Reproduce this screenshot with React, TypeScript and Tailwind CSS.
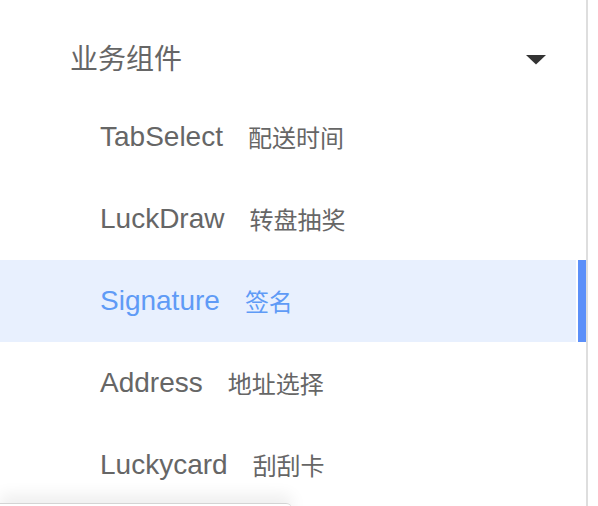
import React from 'react'

interface Item {
  name: string
  label: string
}

const items: Item[] = [
  { name: 'TabSelect', label: '配送时间' },
  { name: 'LuckDraw', label: '转盘抽奖' },
  { name: 'Signature', label: '签名' },
  { name: 'Address', label: '地址选择' },
  { name: 'Luckycard', label: '刮刮卡' },
]

const ACTIVE = 'Signature'

export default function App() {
  return (
    <div
      className="relative w-[598px] h-[506px] overflow-hidden bg-white"
      style={{ fontFamily: '"Liberation Sans", "Noto Sans CJK SC", sans-serif' }}
    >
      <div className="w-[588px] h-full border-r-2 border-[#dedede] flex flex-col">
        {/* Group header */}
        <div className="h-[79px] mt-[17px] flex items-center justify-between pl-[70px] pr-[40px] shrink-0">
          <span className="text-[28px] text-[#666] leading-none" style={{ fontFamily: '"Noto Sans CJK SC", sans-serif' }}>
            业务组件
          </span>
          <svg width="20" height="10" viewBox="0 0 20 10" className="mt-[6px]">
            <path d="M0 0 L20 0 L10 9.5 Z" fill="#333" />
          </svg>
        </div>

        {/* Items */}
        {items.map((item) => {
          const active = item.name === ACTIVE
          return (
            <div key={item.name} className="h-[82px] shrink-0 flex">
              <div
                className={`flex-1 flex items-center pl-[100px] ${active ? 'bg-[#e8f0fe]' : ''}`}
              >
                <span className={`text-[28px] leading-none ${active ? 'text-[#5f9bf6]' : 'text-[#666]'}`}>
                  {item.name}
                </span>
                <span
                  className={`ml-[25px] text-[24px] leading-none ${active ? 'text-[#5f9bf6]' : 'text-[#666]'}`}
                  style={{ fontFamily: '"Noto Sans CJK SC", sans-serif' }}
                >
                  {item.label}
                </span>
              </div>
              <div className="w-[2px]" />
              <div className={`w-[8px] ${active ? 'bg-[#5b8ff9]' : ''}`} />
            </div>
          )
        })}
      </div>

      {/* Bottom floating panel edge */}
      <div className="absolute left-0 top-[503px] w-[292px] h-[20px] bg-white border-t border-[#d4d4d4] rounded-tr-[6px] shadow-[0_-8px_16px_rgba(0,0,0,0.07)]" />
    </div>
  )
}
